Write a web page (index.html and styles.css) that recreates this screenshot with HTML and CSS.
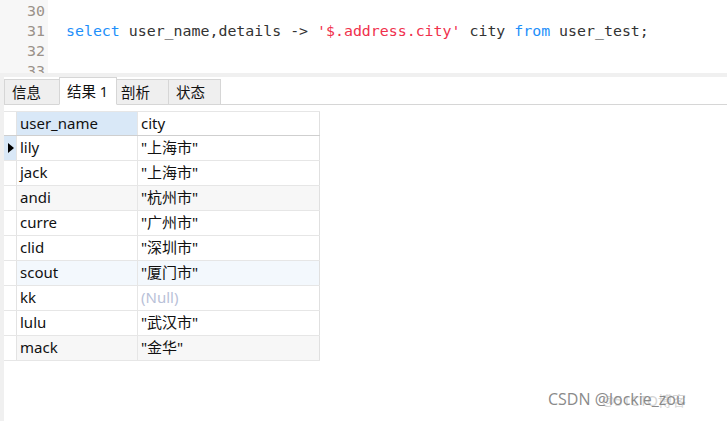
FILE: index.html
```html
<!DOCTYPE html>
<html>
<head>
<meta charset="utf-8">
<link rel="stylesheet" href="styles.css">
</head>
<body>
<div class="editor">
  <div class="gutter">
    <div class="ln">30</div>
    <div class="ln">31</div>
    <div class="ln">32</div>
    <div class="ln">33</div>
  </div>
  <div class="code">
    <div class="line"></div>
    <div class="line"><span class="kw">select</span> user_name,details -&gt; <span class="str">'$.address.city'</span> city <span class="kw">from</span> user_test;</div>
    <div class="line"></div>
    <div class="line"></div>
  </div>
</div>
<div class="band"></div>
<div class="main">
  <div class="strip"></div>
  <div class="content">
    <div class="tabs">
      <div class="tab t1">信息</div>
      <div class="tab active">结果 1</div>
      <div class="tab t3">剖析</div>
      <div class="tab t4">状态</div>
    </div>
    <div class="grid">
      <div class="row head">
        <div class="ind"></div>
        <div class="cell c1 sel">user_name</div>
        <div class="cell c2">city</div>
      </div>
      <div class="row">
        <div class="ind cur"><span class="arrow"></span></div>
        <div class="cell c1">lily</div>
        <div class="cell c2">"上海市"</div>
      </div>
      <div class="row">
        <div class="ind"></div>
        <div class="cell c1">jack</div>
        <div class="cell c2">"上海市"</div>
      </div>
      <div class="row gray">
        <div class="ind"></div>
        <div class="cell c1">andi</div>
        <div class="cell c2">"杭州市"</div>
      </div>
      <div class="row">
        <div class="ind"></div>
        <div class="cell c1">curre</div>
        <div class="cell c2">"广州市"</div>
      </div>
      <div class="row">
        <div class="ind"></div>
        <div class="cell c1">clid</div>
        <div class="cell c2">"深圳市"</div>
      </div>
      <div class="row blue">
        <div class="ind"></div>
        <div class="cell c1">scout</div>
        <div class="cell c2">"厦门市"</div>
      </div>
      <div class="row">
        <div class="ind"></div>
        <div class="cell c1">kk</div>
        <div class="cell c2 null">(Null)</div>
      </div>
      <div class="row">
        <div class="ind"></div>
        <div class="cell c1">lulu</div>
        <div class="cell c2">"武汉市"</div>
      </div>
      <div class="row gray">
        <div class="ind"></div>
        <div class="cell c1">mack</div>
        <div class="cell c2">"金华"</div>
      </div>
    </div>
  </div>
</div>
<div class="wm">
  <span class="wm2">@51CTO博客</span>
  <span class="wm1">CSDN @lockie_zou</span>
</div>
</body>
</html>
```

FILE: styles.css
```css
html, body {
  margin: 0;
  padding: 0;
  background: #ffffff;
  height: 100%;
  overflow: hidden;
}
body {
  font-family: "Noto Sans", "Noto Sans CJK SC", sans-serif;
  position: relative;
}
.editor {
  display: flex;
  height: 73px;
  overflow: hidden;
  font-family: "DejaVu Sans Mono", monospace;
  font-size: 14.9px;
}
.gutter {
  width: 48px;
  background: #f7f7f7;
  padding-top: 1px;
  box-sizing: border-box;
}
.ln {
  height: 20px;
  line-height: 20px;
  text-align: right;
  padding-right: 3px;
  color: #9a9189;
}
.code {
  padding-left: 18px;
  padding-top: 1px;
  color: #333333;
}
.line {
  height: 20px;
  line-height: 20px;
  white-space: pre;
}
.kw { color: #1e8ffa; }
.str { color: #f0304c; }
.band {
  height: 4px;
  background: #f0f0f0;
}
.main {
  display: flex;
  height: 344px;
}
.strip {
  width: 4px;
  background: #f0f0f0;
}
.content {
  flex: 1;
}
.tabs {
  display: flex;
  align-items: flex-end;
  height: 28px;
  box-sizing: border-box;
  border-bottom: 1px solid #d6d6d6;
  font-size: 14.5px;
  color: #111;
}
.tab {
  box-sizing: border-box;
  height: 26px;
  margin-bottom: -1px;
  background: #efefef;
  border: 1px solid #d6d6d6;
  border-bottom: 1px solid #d6d6d6;
  line-height: 24px;
  padding-left: 7px;
}
.t1 { width: 55px; border-right: none; }
.active {
  width: 58px;
  height: 28px;
  background: #ffffff;
  border-bottom-color: #ffffff;
  line-height: 26px;
  padding-left: 7px;
}
.t3 { width: 52px; border-left: none; padding-left: 4px; }
.t4 { width: 52px; border-left: none; padding-left: 7px; }
.grid {
  margin-top: 6px;
  width: 316px;
  font-size: 15px;
  color: #111;
}
.row {
  display: flex;
  height: 25px;
  box-sizing: border-box;
  border-bottom: 1px solid #e6e6e6;
}
.row.head {
  border-top: 1px solid #e6e6e6;
  border-bottom: 1px solid #cfcfcf;
}
.ind {
  width: 13px;
  box-sizing: border-box;
  border-right: 1px solid #e3e3e3;
  background: #ffffff;
  display: flex;
  align-items: center;
  justify-content: center;
}
.ind.cur { background: #d9e8f7; }
.arrow {
  width: 0;
  height: 0;
  border-top: 5px solid transparent;
  border-bottom: 5px solid transparent;
  border-left: 6px solid #000;
  margin-left: 1px;
}
.cell {
  box-sizing: border-box;
  padding-left: 3px;
  line-height: 23px;
  white-space: nowrap;
}
.c1 {
  width: 121px;
  border-right: 1px solid #e6e6e6;
}
.c2 {
  width: 182px;
  border-right: 1px solid #e0e0e0;
}
.sel { background: #d9e8f7; }
.row.gray .cell { background: #f7f7f7; }
.row.blue .cell { background: #f3f8fd; }
.null { color: #b9c1d8; }
.wm {
  position: absolute;
  left: 548px;
  top: 388px;
  width: 170px;
  height: 26px;
}
.wm1 {
  position: absolute;
  left: 0;
  top: 0;
  font-family: "Open Sans", "Noto Sans", sans-serif;
  font-size: 16px;
  color: #8a8a8a;
  white-space: nowrap;
}
.wm2 {
  position: absolute;
  left: 54px;
  top: 2px;
  font-size: 14px;
  color: #d5d5d5;
  white-space: nowrap;
}
```
